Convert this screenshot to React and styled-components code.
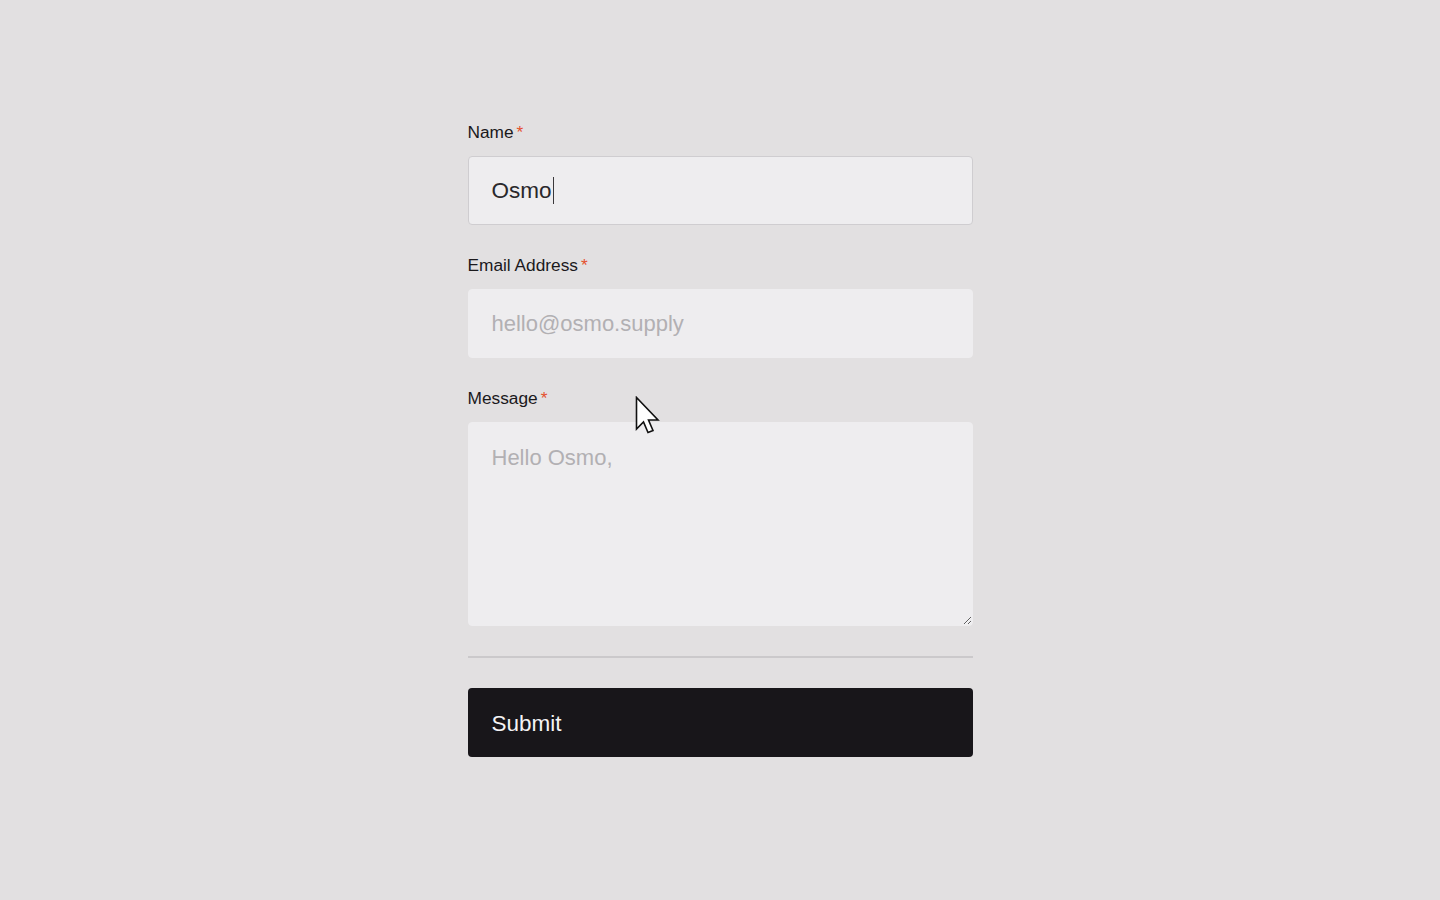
import styled, { createGlobalStyle } from 'styled-components';

const GlobalStyle = createGlobalStyle`
  html, body {
    margin: 0;
    padding: 0;
    background-color: #e2e0e1;
    font-family: "Liberation Sans", Arial, sans-serif;
  }
`;

const Page = styled.div`
  min-height: 900px;
  display: flex;
  justify-content: center;
`;

const Form = styled.form`
  position: relative;
  width: 505px;
  margin-top: 121px;
  display: flex;
  flex-direction: column;
`;

const Field = styled.div`
  display: flex;
  flex-direction: column;
  margin-bottom: 29px;
`;

const Label = styled.label`
  font-size: 17.3px;
  line-height: 22px;
  color: #1b191c;
  margin-bottom: 13px;
`;

const Star = styled.span`
  color: #e4502f;
  margin-left: 3px;
`;

const fieldBase = `
  box-sizing: border-box;
  width: 100%;
  background-color: #eeedef;
  border-radius: 4px;
  font-family: "Liberation Sans", Arial, sans-serif;
  font-size: 22px;
  color: #2a282b;
  padding: 0 23px;
  outline: none;
`;

const FakeInput = styled.div`
  ${fieldBase}
  height: 69px;
  font-size: 22.5px;
  border: 1px solid #cfcdd0;
  display: flex;
  align-items: center;
`;

const Caret = styled.span`
  display: inline-block;
  width: 1.5px;
  height: 27px;
  background-color: #3a383b;
  margin-left: 1px;
`;

const Input = styled.input`
  ${fieldBase}
  height: 69px;
  border: 1px solid #eeedef;
  &::placeholder {
    color: #b2b0b3;
  }
`;

const TextArea = styled.textarea`
  ${fieldBase}
  height: 204px;
  border: 1px solid #eeedef;
  padding-top: 22px;
  line-height: 26px;
  resize: vertical;
  &::placeholder {
    color: #b2b0b3;
  }
`;

const Divider = styled.hr`
  width: 100%;
  margin: 1px 0 30px;
  border: none;
  height: 2px;
  background-color: #cbc9cb;
`;

const Submit = styled.button`
  height: 69px;
  width: 100%;
  border: none;
  border-radius: 4px;
  background-color: #18161a;
  color: #f4f3f5;
  font-family: "Liberation Sans", Arial, sans-serif;
  font-size: 22.5px;
  text-align: left;
  padding: 2px 24px 0;
  cursor: pointer;
`;

const Pointer = styled.svg`
  position: absolute;
  left: 167px;
  top: 275px;
  pointer-events: none;
`;

const App = () => {
  return (
    <Page>
      <GlobalStyle />
      <Form onSubmit={(e) => e.preventDefault()}>
        <Field>
          <Label>Name<Star>*</Star></Label>
          <FakeInput>Osmo<Caret /></FakeInput>
        </Field>
        <Field>
          <Label>Email Address<Star>*</Star></Label>
          <Input type="email" placeholder="hello@osmo.supply" />
        </Field>
        <Field>
          <Label>Message<Star>*</Star></Label>
          <TextArea placeholder="Hello Osmo," />
        </Field>
        <Divider />
        <Submit type="submit">Submit</Submit>
        <Pointer width="28" height="40" viewBox="0 0 28 40">
          <path
            d="M1.5 1.5 L1.5 33 L8.5 26 L13 36.5 L18 34.5 L13.5 24 L23 24 Z"
            fill="#ffffff"
            stroke="#111"
            strokeWidth="1.6"
            strokeLinejoin="miter"
          />
        </Pointer>
      </Form>
    </Page>
  );
};

export default App;
